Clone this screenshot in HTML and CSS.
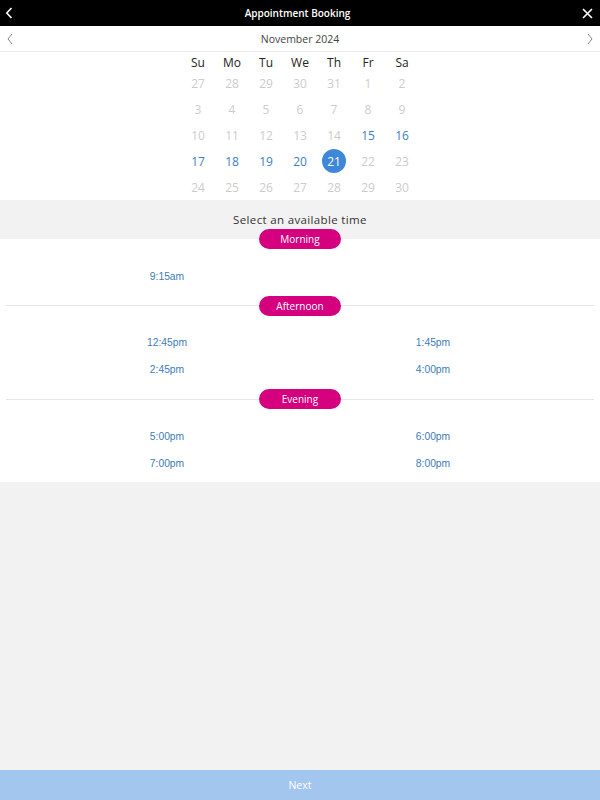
FILE: index.html
```html
<!DOCTYPE html>
<html lang="en">
<head>
<meta charset="utf-8">
<title>Appointment Booking</title>
<link rel="stylesheet" href="styles.css">
</head>
<body>
<div class="app">
  <header class="topbar">
    <svg class="icon back" width="8" height="12" viewBox="0 0 8 12"><path d="M6.5 1 L1.8 6 L6.5 11" fill="none" stroke="#fff" stroke-width="1.6"/></svg>
    <div class="title">Appointment Booking</div>
    <svg class="icon close" width="11" height="11" viewBox="0 0 11 11"><path d="M1 1 L10 10 M10 1 L1 10" fill="none" stroke="#fff" stroke-width="1.6"/></svg>
  </header>
  <div class="monthbar">
    <svg class="icon" width="8" height="12" viewBox="0 0 8 12"><path d="M6 1 L2 6 L6 11" fill="none" stroke="#888" stroke-width="1"/></svg>
    <div class="month">November 2024</div>
    <svg class="icon" width="8" height="12" viewBox="0 0 8 12"><path d="M2 1 L6 6 L2 11" fill="none" stroke="#888" stroke-width="1"/></svg>
  </div>
  <section class="calendar">
    <div class="grid">
      <div class="wd">Su</div><div class="wd">Mo</div><div class="wd">Tu</div><div class="wd">We</div><div class="wd">Th</div><div class="wd">Fr</div><div class="wd">Sa</div>
      <div class="d">27</div><div class="d">28</div><div class="d">29</div><div class="d">30</div><div class="d">31</div><div class="d">1</div><div class="d">2</div>
      <div class="d">3</div><div class="d">4</div><div class="d">5</div><div class="d">6</div><div class="d">7</div><div class="d">8</div><div class="d">9</div>
      <div class="d">10</div><div class="d">11</div><div class="d">12</div><div class="d">13</div><div class="d">14</div><div class="d av">15</div><div class="d av">16</div>
      <div class="d av">17</div><div class="d av">18</div><div class="d av">19</div><div class="d av">20</div><div class="d sel"><span>21</span></div><div class="d">22</div><div class="d">23</div>
      <div class="d">24</div><div class="d">25</div><div class="d">26</div><div class="d">27</div><div class="d">28</div><div class="d">29</div><div class="d">30</div>
    </div>
  </section>
  <div class="select">Select an available time</div>
  <section class="slots">
    <div class="group">
      <div class="ghead first"><span class="pill">Morning</span></div>
      <div class="times">
        <div class="t">9:15am</div>
      </div>
    </div>
    <div class="group">
      <div class="ghead"><span class="pill">Afternoon</span></div>
      <div class="times">
        <div class="t">12:45pm</div><div class="t">1:45pm</div>
        <div class="t">2:45pm</div><div class="t">4:00pm</div>
      </div>
    </div>
    <div class="group">
      <div class="ghead"><span class="pill">Evening</span></div>
      <div class="times last">
        <div class="t">5:00pm</div><div class="t">6:00pm</div>
        <div class="t">7:00pm</div><div class="t">8:00pm</div>
      </div>
    </div>
  </section>
  <div class="next">Next</div>
</div>
</body>
</html>
```
FILE: styles.css
```css
* { box-sizing: border-box; }
html, body { margin: 0; padding: 0; }
body {
  font-family: "Open Sans", "Noto Sans", sans-serif;
  background: #f2f2f2;
  color: #333;
}
.app {
  height: 800px;
  display: flex;
  flex-direction: column;
}
.topbar {
  height: 26px;
  background: #000;
  display: flex;
  align-items: center;
  justify-content: space-between;
  padding: 0 7px 0 5px;
}
.icon { display: block; }
.title {
  color: #fff;
  font-size: 10px;
  font-weight: 600;
}
.monthbar {
  height: 26px;
  background: #fff;
  border-bottom: 1px solid #ebebeb;
  display: flex;
  align-items: center;
  justify-content: space-between;
  padding: 0 6px 0 6px;
}
.month {
  font-size: 10.5px;
  color: #444;
}
.calendar {
  background: #fff;
  height: 148px;
  display: flex;
  justify-content: center;
}
.grid {
  display: grid;
  grid-template-columns: repeat(7, 34px);
  grid-template-rows: 19px repeat(5, 25.8px);
}
.wd {
  display: flex;
  align-items: center;
  justify-content: center;
  font-size: 12px;
  color: #222;
  padding-top: 2px;
}
.d {
  display: flex;
  align-items: center;
  justify-content: center;
  font-size: 12px;
  color: #cccccc;
}
.d.av { color: #3b7fc4; }
.d.sel span {
  width: 24px;
  height: 24px;
  border-radius: 50%;
  background: #3f87d9;
  color: #fff;
  display: flex;
  align-items: center;
  justify-content: center;
}
.select {
  height: 39px;
  display: flex;
  align-items: center;
  justify-content: center;
  font-size: 11.5px;
  letter-spacing: 0.35px;
  color: #333;
}
.slots {
  margin-top: -10px;
  background: linear-gradient(to bottom, transparent 10px, #fff 10px);
}
.ghead {
  height: 20px;
  display: flex;
  align-items: center;
  justify-content: center;
  margin: 0 6px;
  position: relative;
}
.ghead::before {
  content: "";
  position: absolute;
  left: 0;
  right: 0;
  top: 9.5px;
  height: 1px;
  background: #e6e6e6;
}
.ghead.first::before { display: none; }
.pill {
  position: relative;
  width: 82px;
  height: 20px;
  border-radius: 10px;
  background: #d5007e;
  color: #fff;
  font-size: 10px;
  display: flex;
  align-items: center;
  justify-content: center;
}
.times {
  display: grid;
  grid-template-columns: 1fr 1fr;
  grid-auto-rows: 27px;
  padding: 13.5px 34px 6px;
}
.times.last { padding-bottom: 5.5px; }
.t {
  display: flex;
  align-items: center;
  justify-content: center;
  font-family: "Liberation Sans", Arial, sans-serif;
  font-size: 10.3px;
  color: #3d7bb9;
}
.next {
  margin-top: auto;
  height: 30px;
  background: #a3c6ee;
  color: #fff;
  font-size: 10.5px;
  display: flex;
  align-items: center;
  justify-content: center;
}
```
